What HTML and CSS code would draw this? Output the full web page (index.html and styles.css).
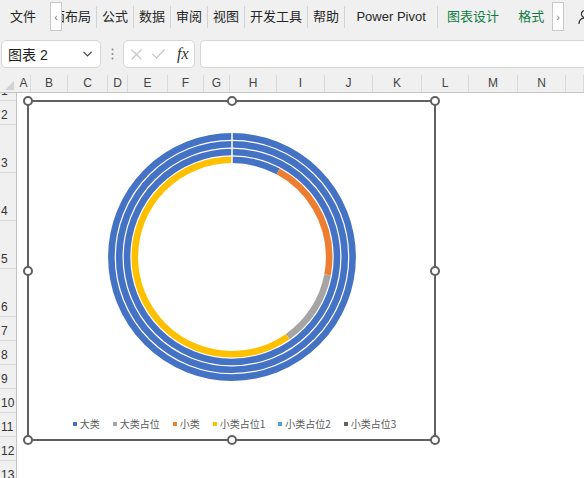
FILE: index.html
```html
<!DOCTYPE html>
<html lang="zh-CN">
<head>
    <meta charset="UTF-8">
    <title>图表 2 - Excel</title>
    <link rel="stylesheet" href="styles.css">
</head>
<body>
    <!-- Ribbon tabs -->
    <div class="ribbon">
        <span class="tab first">文件</span>
        <span class="scroll-btn">&#8249;</span>
        <span class="tab clipped"><span>页面布局</span></span>
        <span class="sep"></span>
        <span class="tab">公式</span>
        <span class="sep"></span>
        <span class="tab">数据</span>
        <span class="sep"></span>
        <span class="tab">审阅</span>
        <span class="sep"></span>
        <span class="tab">视图</span>
        <span class="sep"></span>
        <span class="tab">开发工具</span>
        <span class="sep"></span>
        <span class="tab">帮助</span>
        <span class="sep"></span>
        <span class="tab pivot">Power Pivot</span>
        <span class="sep"></span>
        <span class="tab green design">图表设计</span>
        <span class="tab green format">格式</span>
        <span class="scroll-btn">&#8250;</span>
        <svg class="account" width="14" height="16" viewBox="0 0 14 16">
            <circle cx="7" cy="5" r="3.6" fill="none" stroke="#333" stroke-width="1.2"/>
            <path d="M1 15 C1 10.5 4 9 7 9 C10 9 13 10.5 13 15" fill="none" stroke="#333" stroke-width="1.2"/>
        </svg>
    </div>

    <!-- Formula bar -->
    <div class="formula-bar">
        <div class="name-box">
            <span>图表 2</span>
            <svg width="9" height="6" viewBox="0 0 9 6"><path d="M0.5 0.8 L4.5 4.8 L8.5 0.8" fill="none" stroke="#444" stroke-width="1.2"/></svg>
        </div>
        <div class="grip">
            <svg width="3" height="12" viewBox="0 0 3 12">
                <circle cx="1.5" cy="1.5" r="1" fill="#888"/>
                <circle cx="1.5" cy="6" r="1" fill="#888"/>
                <circle cx="1.5" cy="10.5" r="1" fill="#888"/>
            </svg>
        </div>
        <div class="fx-box">
            <svg width="11" height="11" viewBox="0 0 11 11"><path d="M0.5 0.5 L10.5 10.5 M10.5 0.5 L0.5 10.5" stroke="#c4c4c4" stroke-width="1.1"/></svg>
            <svg width="13" height="10" viewBox="0 0 13 10"><path d="M0.5 5 L4.5 9 L12.5 0.5" fill="none" stroke="#c4c4c4" stroke-width="1.1"/></svg>
            <span class="fx">fx</span>
        </div>
        <div class="formula-input"></div>
    </div>

    <!-- Sheet -->
    <div class="sheet">
        <div class="col-header">
            <div class="corner"><span class="tri"></span></div>
            <div class="col" style="width:14px">A</div>
            <div class="col" style="width:37px">B</div>
            <div class="col" style="width:40px">C</div>
            <div class="col" style="width:20px">D</div>
            <div class="col" style="width:40px">E</div>
            <div class="col" style="width:36px">F</div>
            <div class="col" style="width:26px">G</div>
            <div class="col" style="width:47px">H</div>
            <div class="col" style="width:48px">I</div>
            <div class="col" style="width:48px">J</div>
            <div class="col" style="width:49px">K</div>
            <div class="col" style="width:47px">L</div>
            <div class="col" style="width:49px">M</div>
            <div class="col" style="width:48px">N</div>
            <div class="col" style="width:18px"></div>
        </div>

        <div class="grid">
            <div class="row-header">
                <div class="row" style="height:8px">1</div>
                <div class="row" style="height:24px">2</div>
                <div class="row tall">3</div>
                <div class="row tall">4</div>
                <div class="row tall">5</div>
                <div class="row tall">6</div>
                <div class="row">7</div>
                <div class="row">8</div>
                <div class="row">9</div>
                <div class="row">10</div>
                <div class="row">11</div>
                <div class="row">12</div>
                <div class="row">13</div>
            </div>
            <div class="cells"></div>

            <!-- Chart object floating over the cells -->
            <div class="chart">
                <svg class="plot" width="405" height="300" viewBox="0 0 405 300">
                    <g fill="none" stroke-width="6.6" transform="rotate(-90 203 155)">
                        <circle cx="203" cy="155" r="120.6" stroke="#4472c4"/>
                        <circle cx="203" cy="155" r="112.8" stroke="#4472c4"/>
                        <circle cx="203" cy="155" r="105" stroke="#4472c4"/>
                        <circle cx="203" cy="155" r="97.2" pathLength="360" stroke="#4472c4" stroke-dasharray="28.4 400"/>
                        <circle cx="203" cy="155" r="97.2" pathLength="360" stroke="#ed7d31" stroke-dasharray="72.2 400" stroke-dashoffset="-28.4"/>
                        <circle cx="203" cy="155" r="97.2" pathLength="360" stroke="#a5a5a5" stroke-dasharray="44.4 400" stroke-dashoffset="-100.6"/>
                        <circle cx="203" cy="155" r="97.2" pathLength="360" stroke="#ffc000" stroke-dasharray="215 400" stroke-dashoffset="-145"/>
                    </g>
                    <g stroke="#fff" stroke-width="1.5">
                        <line x1="203" y1="29" x2="203" y2="92"/>
                        <line x1="203" y1="92" x2="203" y2="102" transform="rotate(28.4 203 155)"/>
                        <line x1="203" y1="92" x2="203" y2="102" transform="rotate(100.6 203 155)"/>
                        <line x1="203" y1="92" x2="203" y2="102" transform="rotate(145 203 155)"/>
                    </g>
                </svg>
                <div class="legend">
                    <span class="item"><i style="background:#4472c4"></i>大类</span>
                    <span class="item"><i style="background:#a5a5a5"></i>大类占位</span>
                    <span class="item"><i style="background:#ed7d31"></i>小类</span>
                    <span class="item"><i style="background:#ffc000"></i>小类占位1</span>
                    <span class="item"><i style="background:#5b9bd5"></i>小类占位2</span>
                    <span class="item"><i style="background:#636363"></i>小类占位3</span>
                </div>

                <span class="handle tl"></span>
                <span class="handle tm"></span>
                <span class="handle tr"></span>
                <span class="handle ml"></span>
                <span class="handle mr"></span>
                <span class="handle bl"></span>
                <span class="handle bm"></span>
                <span class="handle br"></span>
            </div>
        </div>
    </div>
</body>
</html>
```

FILE: styles.css
```css
/* General */
html, body {
    margin: 0;
    padding: 0;
}

body {
    width: 584px;
    height: 478px;
    overflow: hidden;
    background: #f0f0f0;
    color: #262626;
    font-family: 'Liberation Sans', 'Noto Sans CJK SC', sans-serif;
    display: flex;
    flex-direction: column;
}

/* Ribbon tabs */
.ribbon {
    height: 33px;
    display: flex;
    align-items: center;
    font-size: 13px;
    white-space: nowrap;
    flex-shrink: 0;
    overflow: hidden;
}

.tab {
    padding: 0 5px;
    line-height: 20px;
    flex-shrink: 0;
}

.tab.first {
    padding: 0;
    margin-left: 10px;
    margin-right: 14px;
}

.tab.clipped {
    width: 29px;
    padding: 0 5px 0 0;
    overflow: hidden;
    display: flex;
    justify-content: flex-end;
}

.tab.pivot {
    width: 92px;
    padding: 0;
    text-align: center;
}

.tab.green {
    color: #107c41;
}

.tab.design {
    padding: 0 10px 0 9px;
}

.tab.format {
    padding: 0 8px 0 9px;
}

.sep {
    width: 1px;
    height: 22px;
    background: #d3d3d3;
    flex-shrink: 0;
}

.scroll-btn {
    width: 12px;
    height: 29px;
    box-sizing: border-box;
    border: 1px solid #c8c8c8;
    background: #fff;
    color: #777;
    font-size: 11px;
    display: flex;
    align-items: center;
    justify-content: center;
    flex-shrink: 0;
}

.account {
    margin-left: 14px;
    flex-shrink: 0;
}

/* Formula bar */
.formula-bar {
    display: flex;
    align-items: center;
    height: 28px;
    margin-top: 7px;
    flex-shrink: 0;
    overflow: hidden;
}

.name-box {
    margin-left: 1px;
    width: 100px;
    height: 28px;
    box-sizing: border-box;
    border: 1px solid #d6d6d6;
    border-radius: 5px;
    background: #fff;
    display: flex;
    align-items: center;
    justify-content: space-between;
    padding: 0 8px 0 6px;
    font-size: 14px;
    color: #222;
    flex-shrink: 0;
}

.grip {
    width: 22px;
    display: flex;
    justify-content: center;
    flex-shrink: 0;
}

.fx-box {
    width: 72px;
    height: 28px;
    box-sizing: border-box;
    border: 1px solid #d6d6d6;
    border-radius: 5px;
    background: #fff;
    display: flex;
    align-items: center;
    padding-left: 7px;
    gap: 10px;
    flex-shrink: 0;
}

.fx {
    font-family: 'Liberation Serif', serif;
    font-style: italic;
    font-size: 16px;
    color: #333;
    margin-left: 2px;
}

.formula-input {
    flex: 1;
    height: 28px;
    box-sizing: border-box;
    margin-left: 5px;
    border: 1px solid #d6d6d6;
    border-right: none;
    border-radius: 5px 0 0 5px;
    background: #fff;
}

/* Sheet */
.sheet {
    margin-top: 7px;
    flex: 1;
    display: flex;
    flex-direction: column;
}

.col-header {
    height: 17px;
    display: flex;
    border-bottom: 1px solid #c4c4c4;
    font-size: 12px;
    color: #444;
    flex-shrink: 0;
}

.corner {
    width: 17px;
    position: relative;
    flex-shrink: 0;
}

.tri {
    position: absolute;
    right: 3px;
    bottom: 2px;
    width: 0;
    height: 0;
    border-left: 9px solid transparent;
    border-bottom: 9px solid #d2d2d2;
}

.col {
    box-sizing: border-box;
    border-right: 1px solid #dadada;
    text-align: center;
    line-height: 17px;
    flex-shrink: 0;
}

.grid {
    flex: 1;
    display: flex;
    position: relative;
    background: #fff;
}

.row-header {
    width: 17px;
    box-sizing: border-box;
    border-right: 1px solid #c4c4c4;
    background: #f0f0f0;
    font-size: 12px;
    color: #333;
    flex-shrink: 0;
}

.row {
    height: 24px;
    box-sizing: border-box;
    border-bottom: 1px solid #dadada;
    display: flex;
    align-items: flex-end;
    padding: 0 0 2px 1px;
    line-height: 14px;
    overflow: hidden;
}

.row.tall {
    height: 48px;
}

.cells {
    flex: 1;
}

/* Chart */
.chart {
    position: absolute;
    left: 27px;
    top: 7px;
    width: 409px;
    height: 341px;
    box-sizing: border-box;
    border: 2px solid #606060;
    background: #fff;
}

.plot {
    display: block;
}

.legend {
    margin-top: 15px;
    display: flex;
    justify-content: center;
    padding-left: 6px;
    gap: 13px;
    font-size: 10px;
    line-height: 14px;
    color: #595959;
    font-family: 'Noto Sans CJK SC', sans-serif;
}

.item {
    display: flex;
    align-items: center;
}

.item i {
    width: 4px;
    height: 4px;
    margin-right: 3px;
}

.handle {
    position: absolute;
    width: 10px;
    height: 10px;
    box-sizing: border-box;
    border: 2px solid #606060;
    border-radius: 50%;
    background: #fff;
}

.tl { left: -6px; top: -6px; }
.tm { left: calc(50% - 5px); top: -6px; }
.tr { right: -6px; top: -6px; }
.ml { left: -6px; top: calc(50% - 5px); }
.mr { right: -6px; top: calc(50% - 5px); }
.bl { left: -6px; bottom: -6px; }
.bm { left: calc(50% - 5px); bottom: -6px; }
.br { right: -6px; bottom: -6px; }
```
